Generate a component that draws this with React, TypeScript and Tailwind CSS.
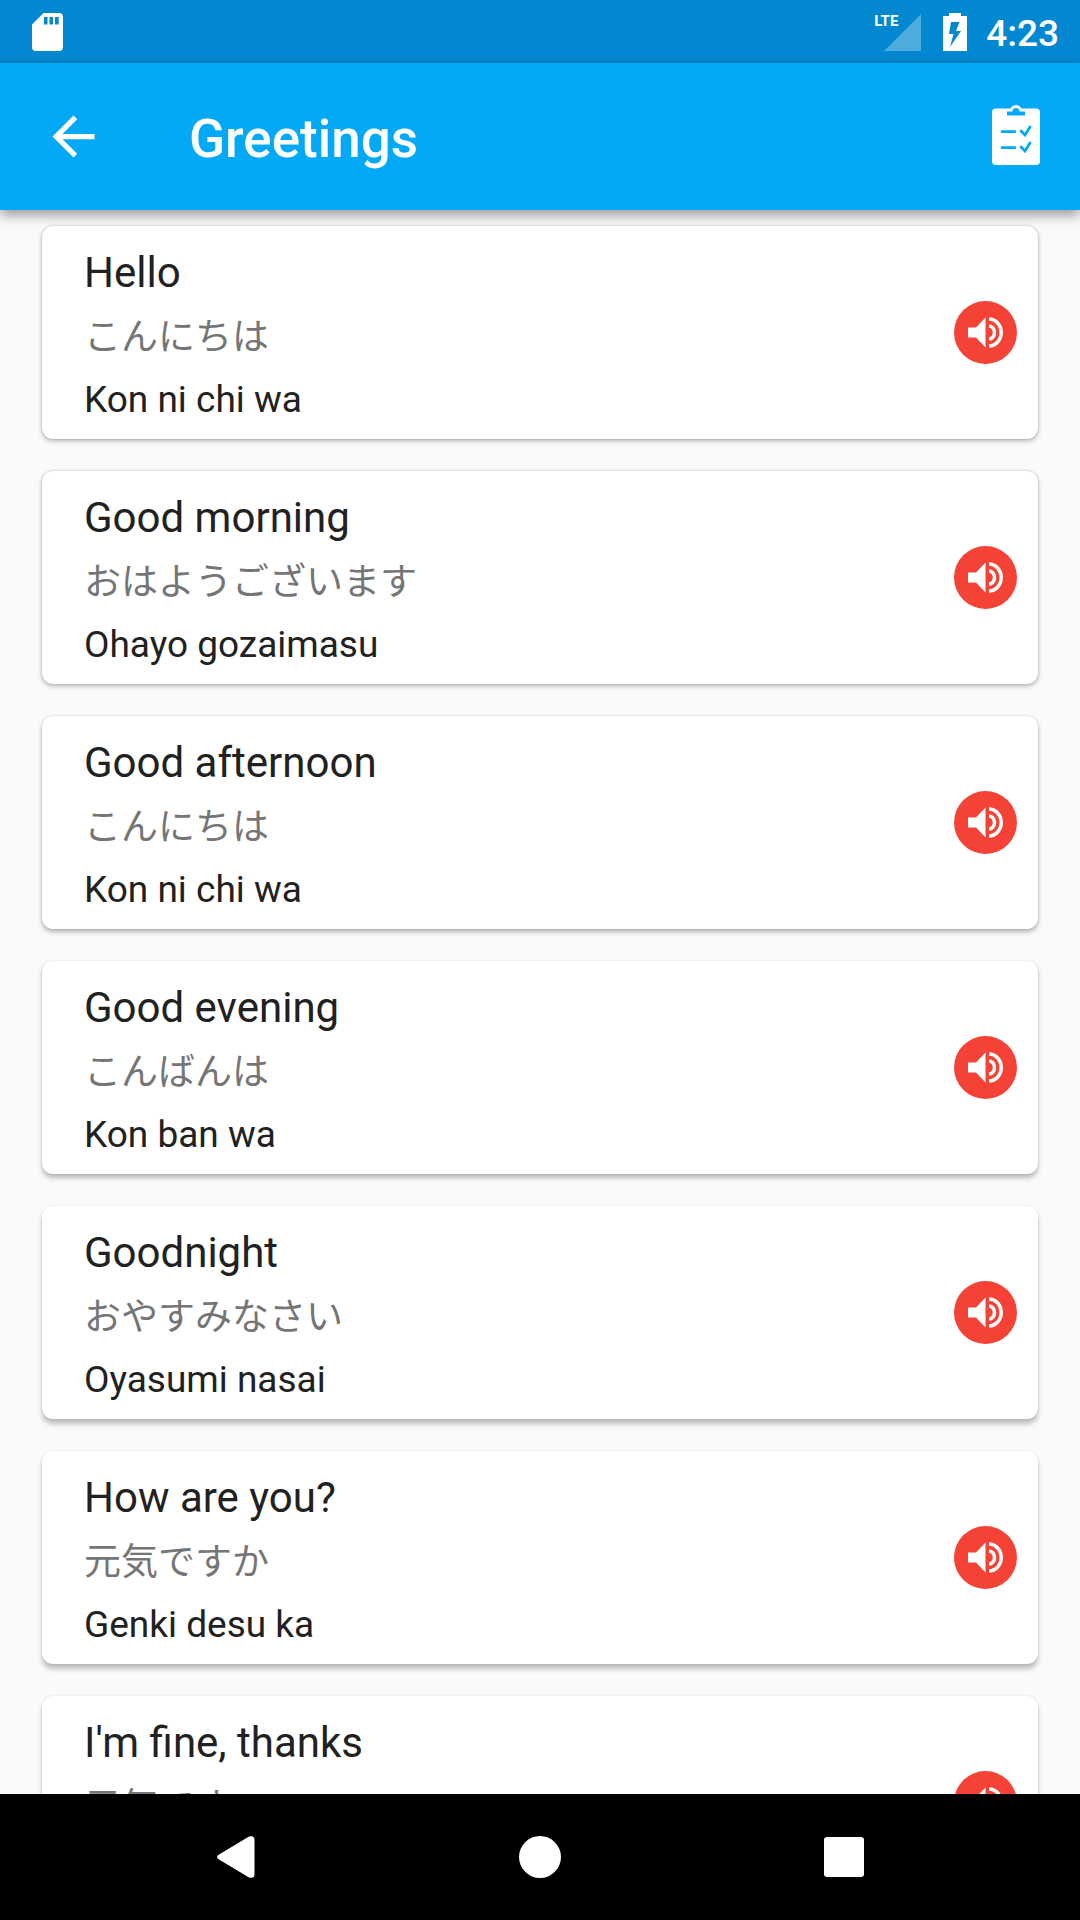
type Phrase = { english: string; japanese: string; romaji: string; shadow: string };

const phrases: Phrase[] = [
  { english: "Hello", japanese: "こんにちは", romaji: "Kon ni chi wa", shadow: "shadow-[0_2px_5px_rgba(0,0,0,0.28),0_0_2px_rgba(0,0,0,0.2)]" },
  { english: "Good morning", japanese: "おはようございます", romaji: "Ohayo gozaimasu", shadow: "shadow-[0_2px_5px_rgba(0,0,0,0.28),0_0_2px_rgba(0,0,0,0.2)]" },
  { english: "Good afternoon", japanese: "こんにちは", romaji: "Kon ni chi wa", shadow: "shadow-[0_3px_5px_rgba(0,0,0,0.28),0_0_2px_rgba(0,0,0,0.15)]" },
  { english: "Good evening", japanese: "こんばんは", romaji: "Kon ban wa", shadow: "shadow-[0_4px_5px_rgba(0,0,0,0.26),0_0_2px_rgba(0,0,0,0.12)]" },
  { english: "Goodnight", japanese: "おやすみなさい", romaji: "Oyasumi nasai", shadow: "shadow-[0_5px_5px_rgba(0,0,0,0.24),0_0_2px_rgba(0,0,0,0.12)]" },
  { english: "How are you?", japanese: "元気ですか", romaji: "Genki desu ka", shadow: "shadow-[0_5px_5px_rgba(0,0,0,0.24),0_0_2px_rgba(0,0,0,0.12)]" },
  { english: "I'm fine, thanks", japanese: "元気です", romaji: "Genki desu", shadow: "shadow-[0_5px_5px_rgba(0,0,0,0.24),0_0_2px_rgba(0,0,0,0.12)]" },
];

function StatusBar() {
  return (
    <div className="flex h-[63px] shrink-0 items-center justify-between bg-[#0288d1] pr-[21px] pl-8 text-white">
      <svg className="h-[38px] w-[31px]" viewBox="0 0 31 38" aria-label="SD card">
        <path
          fill="currentColor"
          fillRule="evenodd"
          d="M11.5 0H27a4 4 0 0 1 4 4v30a4 4 0 0 1-4 4H4a4 4 0 0 1-4-4V11.5zM12 4v7.5h3.5V4zm5.5 0v7.5H21V4zM23 4v7.5h3.700V4z"
        />
      </svg>
      <div className="flex items-center">
        <div className="relative">
          <svg className="h-[38px] w-[48px]" viewBox="0 0 48 38" aria-hidden="true">
            <path fill="#4eacdf" d="M47 1v37H10z" />
          </svg>
          <span className="absolute top-0 left-0 text-[15px] leading-4 font-bold">LTE</span>
        </div>
        <svg className="ml-[21px] h-[38px] w-6" viewBox="0 0 24 38" aria-label="Battery charging">
          <path
            fill="currentColor"
            fillRule="evenodd"
            d="M6 0h12v3h6v35H0V3h6zM8 9L6 21h4.500L7 34l11-16h-5l3.500-9z"
          />
        </svg>
        <span className="ml-[19px] pt-1 text-[37px] leading-[43px] font-medium">4:23</span>
      </div>
    </div>
  );
}

function AppBar() {
  return (
    <header className="z-10 flex h-[147px] shrink-0 items-center bg-[#03a9f4] text-white shadow-[0_5px_12px_rgba(0,0,0,0.4)]">
      <button type="button" aria-label="Back" className="flex size-[147px] items-center justify-center">
        <svg className="size-[63px]" viewBox="0 0 24 24" fill="currentColor">
          <path d="M20 11H7.830l5.590-5.590L12 4l-8 8 8 8 1.410-1.410L7.830 13H20v-2z" />
        </svg>
      </button>
      <h1 className="ml-[42px] flex-1 pt-[5px] text-[53px] leading-[62px] font-medium">Greetings</h1>
      <button type="button" aria-label="Quiz" className="flex h-[126px] w-[128px] items-center justify-center pb-1">
        <svg className="h-[66px] w-12" viewBox="0 0 48 66">
          <path
            fill="currentColor"
            fillRule="evenodd"
            d="M4 6.500H18.500C20 4.500 21.500 3 24 3s4 1.500 5.500 3.500H44a4 4 0 0 1 4 4V59a4 4 0 0 1-4 4H4a4 4 0 0 1-4-4V10.500a4 4 0 0 1 4-4zM15 9.500v4h18v-4h-5.500a3.500 3.500 0 0 0-7 0z"
          />
          <path
            d="M10 29.500H23M10 45.500H23M29 29l4 4 5-8M29 45l4 4 5-8"
            stroke="#03a9f4"
            strokeWidth="2.750"
            strokeLinecap="round"
            fill="none"
          />
        </svg>
      </button>
    </header>
  );
}

function PhraseCard({ phrase }: { phrase: Phrase }) {
  return (
    <li className={`flex items-center rounded-[11px] bg-white pr-[21px] pl-[42px] ${phrase.shadow}`}>
      <div className="flex-1 pt-[15px] pb-[9px] text-[#212121]">
        <h2 className="text-[42px] leading-[63px]">{phrase.english}</h2>
        <p lang="ja" className="font-['Noto_Sans_CJK_JP',sans-serif] text-[37px] leading-[61px] text-[#757575]">
          {phrase.japanese}
        </p>
        <p className="mt-1 text-[37px] leading-[61px]">{phrase.romaji}</p>
      </div>
      <button type="button" aria-label={`Play ${phrase.english}`} className="size-[63px] rounded-full bg-[#f44336] text-white">
        <svg viewBox="0 0 63 63" className="size-full">
          <path fill="currentColor" d="M14 26.500h8L31.500 16.500v30L22 36.500h-8z" />
          <path
            d="M35 18a12.200 13.500 0 0 1 0 27M35 25a5.500 6.500 0 0 1 0 13"
            stroke="currentColor"
            strokeWidth="3.500"
            fill="none"
          />
        </svg>
      </button>
    </li>
  );
}

function NavigationBar() {
  return (
    <nav className="z-10 grid h-[126px] shrink-0 grid-cols-3 bg-black px-[84px] text-white">
      <button type="button" aria-label="Back" className="flex items-center justify-center">
        <svg className="size-[42px]" viewBox="0 0 42 42" fill="currentColor">
          <path d="M4 18.500L34 .5Q39.500-1 39.500 4v34q0 5-5.500 3.500L4 23.500q-4-2.500 0-5z" />
        </svg>
      </button>
      <button type="button" aria-label="Home" className="flex items-center justify-center">
        <span className="size-[42px] rounded-full bg-white" />
      </button>
      <button type="button" aria-label="Recent apps" className="flex items-center justify-center">
        <span className="size-10 rounded-[3px] bg-white" />
      </button>
    </nav>
  );
}

export default function App() {
  return (
    <div className="flex h-screen flex-col bg-[#fafafa] font-[Roboto,'Noto_Sans_CJK_JP',sans-serif]">
      <StatusBar />
      <AppBar />
      <main className="min-h-0 flex-1 overflow-y-auto [scrollbar-width:none]">
        <ul className="flex flex-col gap-8 px-[42px] py-4">
          {phrases.map((phrase) => (
            <PhraseCard key={phrase.english} phrase={phrase} />
          ))}
        </ul>
      </main>
      <NavigationBar />
    </div>
  );
}
